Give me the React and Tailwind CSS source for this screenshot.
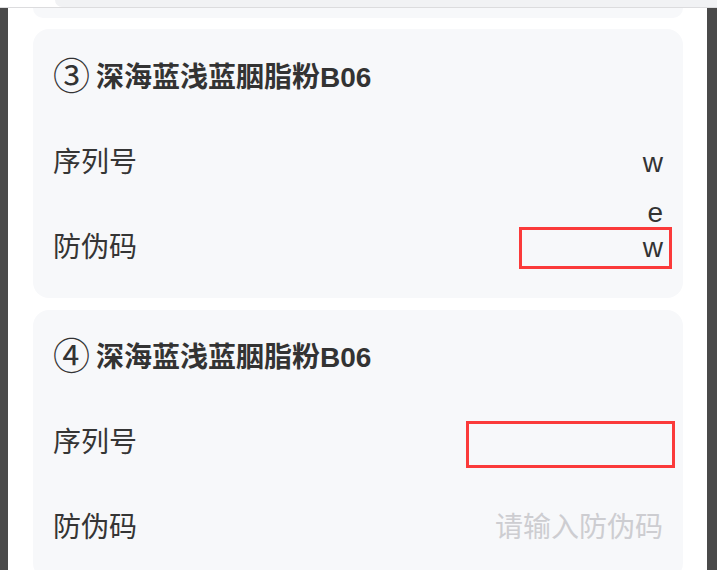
const FONT = { fontFamily: '"Liberation Sans", "Noto Sans CJK SC", sans-serif' };

function Row({ label, children }) {
  return (
    <div className="flex h-[85px] items-center justify-between">
      <span className="text-[28px] leading-[40px] text-[#353535]">{label}</span>
      {children}
    </div>
  );
}

function Title({ num, text }) {
  return (
    <div className="flex h-[40px] items-center text-[#333]">
      <span className="text-[37px] leading-[40px] font-normal">{num}</span>
      <span className="ml-[6px] text-[28px] leading-[40px] font-semibold">{text}</span>
    </div>
  );
}

export default function App() {
  return (
    <div className="flex h-[570px] w-[717px] flex-col overflow-hidden bg-white" style={FONT}>
      {/* top edge of the previous screen */}
      <div className="flex h-[8px] shrink-0 border-b border-[#dcdcde] bg-white">
        <div className="ml-[55px] flex-1 rounded-bl-[20px] bg-[#f1f2f4]" />
      </div>

      <div className="flex flex-1">
        <div className="w-[8px] shrink-0 bg-[#4a4a4a]" />

        <div className="flex flex-1 flex-col pl-[25px] pr-[24px]">
          <div className="h-[10px] shrink-0 rounded-b-2xl bg-[#f7f8fa]" />

          {/* card 3 */}
          <div className="mt-[11px] shrink-0 rounded-2xl bg-[#f7f8fa] pl-[20px] pr-[20px] pt-[29px] pb-[8px]">
            <Title num="③" text="深海蓝浅蓝胭脂粉B06" />
            <div className="mt-[22px]">
              <Row label="序列号">
                <span className="text-[28px] leading-[40px] text-[#333]">w</span>
              </Row>
              <Row label="防伪码">
                <div className="relative mr-[-9px] flex h-[42px] w-[153px] items-center justify-end border-[3px] border-[#fb3a3a] pr-[6px] text-[28px] text-[#333]">
                  <span className="absolute -top-[31px] right-[6px] leading-[28px]">e</span>
                  <span className="leading-[28px]">w</span>
                </div>
              </Row>
            </div>
          </div>

          {/* card 4 */}
          <div className="mt-[12px] shrink-0 rounded-2xl bg-[#f7f8fa] pl-[20px] pr-[20px] pt-[28px] pb-[9px]">
            <Title num="④" text="深海蓝浅蓝胭脂粉B06" />
            <div className="mt-[22px]">
              <Row label="序列号">
                <div className="mr-[-12px] mt-[3px] h-[47px] w-[209px] border-[3px] border-[#fb3a3a]" />
              </Row>
              <Row label="防伪码">
                <span className="text-[28px] leading-[40px] text-[#cdcdd1]">请输入防伪码</span>
              </Row>
            </div>
          </div>
        </div>

        <div className="w-[10px] shrink-0 bg-[#4a4a4a]" />
      </div>
    </div>
  );
}
